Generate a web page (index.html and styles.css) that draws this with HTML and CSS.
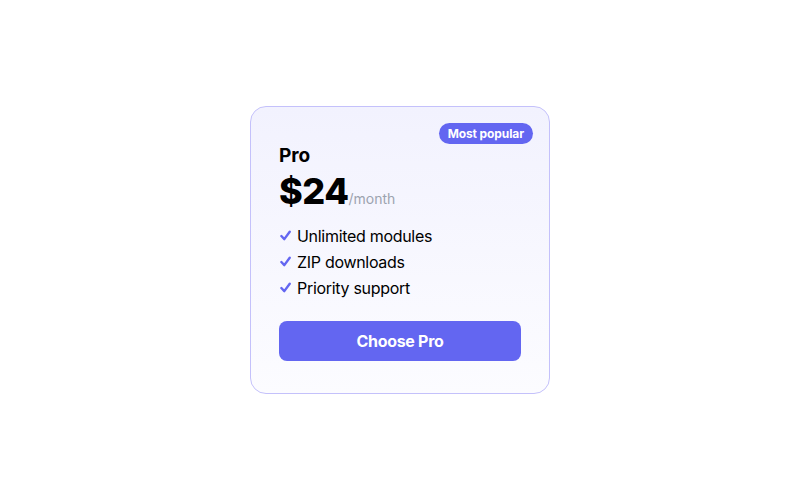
FILE: index.html
```html
<!DOCTYPE html>
<html>
<head>
<meta charset="utf-8">
<link rel="stylesheet" href="styles.css">
</head>
<body>
<div class="page">
  <div class="card">
    <span class="badge">Most popular</span>
    <div class="plan">Pro</div>
    <div class="price"><span class="amount">$24</span><span class="period">/month</span></div>
    <ul class="features">
      <li><svg class="check" viewBox="0 0 12 12" width="11" height="11"><path d="M1.5 6.6L4.7 10L10.6 1.9" fill="none" stroke="#6366f1" stroke-width="2.6" stroke-linecap="round" stroke-linejoin="round"/></svg>Unlimited modules</li>
      <li><svg class="check" viewBox="0 0 12 12" width="11" height="11"><path d="M1.5 6.6L4.7 10L10.6 1.9" fill="none" stroke="#6366f1" stroke-width="2.6" stroke-linecap="round" stroke-linejoin="round"/></svg>ZIP downloads</li>
      <li><svg class="check" viewBox="0 0 12 12" width="11" height="11"><path d="M1.5 6.6L4.7 10L10.6 1.9" fill="none" stroke="#6366f1" stroke-width="2.6" stroke-linecap="round" stroke-linejoin="round"/></svg>Priority support</li>
    </ul>
    <button class="cta">Choose Pro</button>
  </div>
</div>
</body>
</html>
```
FILE: styles.css
```css
* { box-sizing: border-box; }
html, body { margin: 0; padding: 0; background: #ffffff; }
body { font-family: Inter, "Noto Sans", sans-serif; color: #111; }
.page {
  width: 800px;
  height: 500px;
  display: flex;
  align-items: center;
  justify-content: center;
}
.card {
  position: relative;
  width: 300px;
  padding: 38px 28px 32px;
  border: 1px solid #c4c1fb;
  border-radius: 16px;
  background: linear-gradient(180deg, #f2f2fe 0%, #fcfcff 100%);
}
.badge {
  position: absolute;
  top: 16px;
  right: 16px;
  height: 21px;
  padding: 0 9px;
  border-radius: 999px;
  background: #6366f1;
  color: #fff;
  font-size: 12px;
  font-weight: 700;
  line-height: 21px;
  letter-spacing: -0.1px;
}
.plan {
  font-size: 19px;
  font-weight: 700;
  line-height: 22px;
  color: #000;
}
.price {
  margin-top: 5px;
  display: flex;
  align-items: baseline;
}
.amount {
  font-size: 36px;
  font-weight: 800;
  line-height: 1.1;
  color: #000;
  letter-spacing: -0.5px;
}
.period {
  font-size: 14px;
  color: #9ca3af;
}
.features {
  list-style: none;
  margin: 11px 0 0;
  padding: 0;
}
.features li {
  display: flex;
  align-items: center;
  gap: 6px;
  padding-left: 1px;
  font-size: 16px;
  line-height: 26px;
  letter-spacing: -0.3px;
  color: #000;
}
.check { flex: none; }
.cta {
  display: block;
  width: 100%;
  height: 40px;
  margin-top: 20px;
  border: 0;
  border-radius: 8px;
  background: #6366f1;
  color: #fff;
  font-family: inherit;
  font-size: 16px;
  font-weight: 700;
  letter-spacing: -0.3px;
}
```
